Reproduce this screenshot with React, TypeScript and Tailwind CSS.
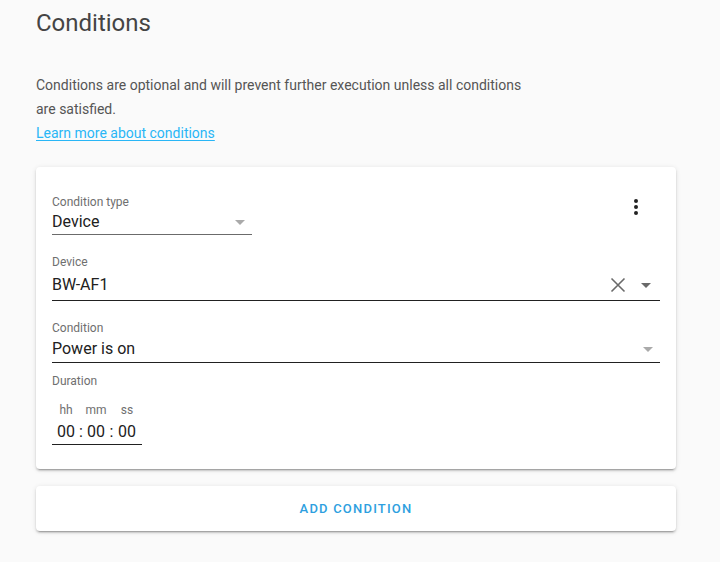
import React from "react";

const font = { fontFamily: "Roboto, 'Noto Sans', sans-serif" };

const Arrow: React.FC<{ className?: string }> = ({ className }) => (
  <svg width="10" height="5" viewBox="0 0 10 5" className={className}>
    <path d="M0 0 L5 5 L10 0 Z" fill="currentColor" />
  </svg>
);

const Label: React.FC<{ children: React.ReactNode }> = ({ children }) => (
  <div className="text-xs leading-4 text-[#6f6f6f]">{children}</div>
);

const TimePart: React.FC<{ unit: string }> = ({ unit }) => (
  <div className="flex w-[20px] flex-col items-center">
    <span className="text-xs leading-4 text-[#6f6f6f]">{unit}</span>
    <span className="mt-[2px] text-base leading-6">00</span>
  </div>
);

const shadow =
  "shadow-[0_2px_2px_0_rgba(0,0,0,0.14),0_1px_5px_0_rgba(0,0,0,0.12),0_3px_1px_-2px_rgba(0,0,0,0.2)]";

export default function App() {
  return (
    <div className="min-h-[562px] w-[720px] bg-[#fafafa] pl-9 pr-[44px] pt-[7px]" style={font}>
      <h1 className="text-2xl leading-8 text-[#444]">Conditions</h1>

      <div className="mt-[34px] w-[500px] text-sm leading-6 text-[#555]">
        Conditions are optional and will prevent further execution unless all conditions are
        satisfied.
      </div>
      <a className="block text-sm leading-6 text-[#29b6f6] underline underline-offset-2">
        Learn more about conditions
      </a>

      <div className={`relative mt-[22px] rounded bg-white px-4 pt-[27px] pb-[24px] ${shadow}`}>
        <button className="absolute right-4 top-4 flex h-12 w-12 items-center justify-center text-[#222]">
          <svg width="24" height="24" viewBox="0 0 24 24">
            <path
              fill="currentColor"
              d="M12 8a2 2 0 1 0 0-4 2 2 0 0 0 0 4zm0 2a2 2 0 1 0 0 4 2 2 0 0 0 0-4zm0 6a2 2 0 1 0 0 4 2 2 0 0 0 0-4z"
            />
          </svg>
        </button>

        <div className="w-[200px]">
          <Label>Condition type</Label>
          <div className="flex h-[25px] items-center justify-between border-b border-[#6b6b6b] text-base text-[#212121]">
            <span>Device</span>
            <Arrow className="mr-[7px] text-[#aaa]" />
          </div>
        </div>

        <div className="mt-[19px]">
          <Label>Device</Label>
          <div className="flex h-[31px] items-center border-b border-[#212121] text-base text-[#212121]">
            <span className="flex-1 pb-[1px]">BW-AF1</span>
            <svg width="16" height="16" viewBox="0 0 16 16" className="mr-[15px] text-[#6a6a6a]">
              <path d="M1.5 1.5 L14.5 14.5 M14.5 1.5 L1.5 14.5" stroke="currentColor" strokeWidth="1.6" />
            </svg>
            <Arrow className="mr-[9px] text-[#6a6a6a]" />
          </div>
        </div>

        <div className="mt-[19px]">
          <Label>Condition</Label>
          <div className="flex h-[27px] items-center justify-between border-b border-[#212121] text-base text-[#212121]">
            <span>Power is on</span>
            <Arrow className="mr-[7px] text-[#aaa]" />
          </div>
        </div>

        <div className="mt-[10px]">
          <Label>Duration</Label>
          <div className="mt-[13px] flex w-[90px] items-end border-b border-[#212121] pl-1 text-[#212121]">
            <TimePart unit="hh" />
            <span className="w-[10px] text-center text-base leading-6">:</span>
            <TimePart unit="mm" />
            <span className="w-[11px] text-center text-base leading-6">:</span>
            <TimePart unit="ss" />
          </div>
        </div>
      </div>

      <div className={`mt-[17px] flex h-[45px] items-center justify-center rounded bg-white ${shadow}`}>
        <span className="text-[13px] font-medium tracking-[1.2px] text-[#2e9fe0]">ADD CONDITION</span>
      </div>
    </div>
  );
}
